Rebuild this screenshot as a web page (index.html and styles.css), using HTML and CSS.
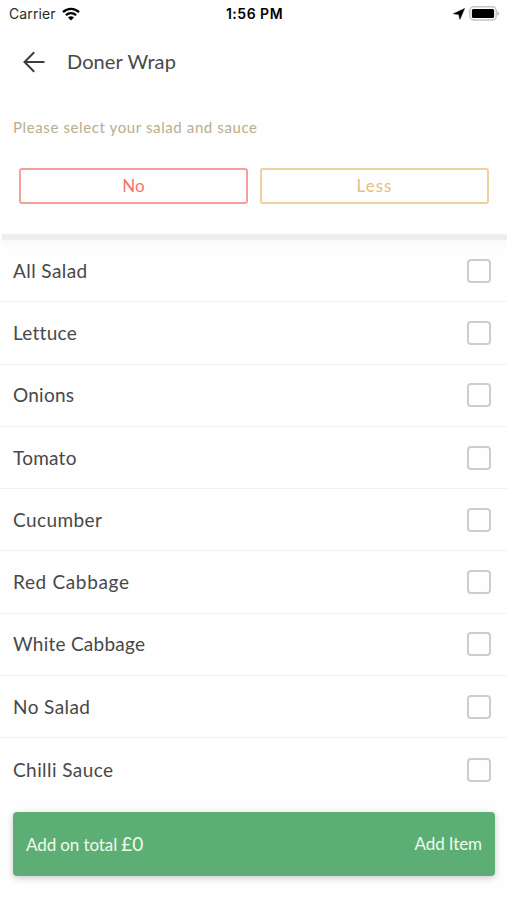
FILE: index.html
```html
<!DOCTYPE html>
<html lang="en">
<head>
    <meta charset="UTF-8">
    <meta name="viewport" content="width=device-width, initial-scale=1.0">
    <title>Doner Wrap</title>
    <link rel="stylesheet" href="styles.css">
</head>
<body>

    <div class="status-bar">
        <div class="status-left">
            <span class="carrier">Carrier</span>
            <svg class="wifi" width="18" height="14" viewBox="0 0 18 14">
                <path d="M1 5.2a11.5 11.5 0 0 1 16 0M3.9 8.2a7.3 7.3 0 0 1 10.2 0" fill="none" stroke="#000" stroke-width="2.3"/>
                <path d="M9 13.6 6 10.6a4.3 4.3 0 0 1 6 0z"/>
            </svg>
        </div>
        <span class="time">1:56 PM</span>
        <div class="status-right">
            <svg class="location" width="12" height="12" viewBox="0 0 12 12">
                <path d="M11.6.5 6.9 11.4 5.8 6.6.4 5.8z" stroke="#000" stroke-width=".5"/>
            </svg>
            <svg class="battery" width="31" height="15" viewBox="0 0 31 15">
                <rect x="0.8" y="0.8" width="26.4" height="13.2" rx="4" fill="#fff" stroke="#c4c4c4" stroke-width="1.4"/>
                <rect x="2.9" y="2.9" width="22.2" height="9" rx="1.5"/>
                <path d="M28.4 5.2c2.2.9 2.2 3.5 0 4.4z" fill="#b5b5b5"/>
            </svg>
        </div>
    </div>

    <div class="header">
        <svg class="back" width="22" height="22" viewBox="0 0 22 22">
            <path d="M21.5 11H1.7M11.2 1.3 1.5 11l9.7 9.7" fill="none" stroke="#3c3c3c" stroke-width="2"/>
        </svg>
        <h1>Doner Wrap</h1>
    </div>

    <p class="hint">Please select your salad and sauce</p>

    <div class="options">
        <button class="option no">No</button>
        <button class="option less">Less</button>
    </div>

    <div class="divider"></div>

    <div class="list">
        <label class="item"><span class="name wide">All Salad</span><span class="box"></span></label>
        <label class="item"><span class="name">Lettuce</span><span class="box"></span></label>
        <label class="item"><span class="name">Onions</span><span class="box"></span></label>
        <label class="item"><span class="name">Tomato</span><span class="box"></span></label>
        <label class="item"><span class="name wide">Cucumber</span><span class="box"></span></label>
        <label class="item"><span class="name wider">Red Cabbage</span><span class="box"></span></label>
        <label class="item"><span class="name">White Cabbage</span><span class="box"></span></label>
        <label class="item"><span class="name wide">No Salad</span><span class="box"></span></label>
        <label class="item"><span class="name wide">Chilli Sauce</span><span class="box"></span></label>
    </div>

    <div class="add-bar">
        <div class="total">Add on total <span class="price">£0</span></div>
        <span class="add">Add Item</span>
    </div>

</body>
</html>
```

FILE: styles.css
```css
* {
    box-sizing: border-box;
}

body {
    margin: 0;
    height: 900px;
    overflow: hidden;
    background: #fefefe;
    color: #484848;
    font-family: Lato, sans-serif;
}

.status-bar {
    display: grid;
    grid-template-columns: 1fr auto 1fr;
    align-items: center;
    height: 27px;
    padding: 0 7px 0 9px;
    color: #000;
    font-family: Inter, sans-serif;
    font-size: 14px;
}

.status-left,
.status-right {
    display: flex;
    align-items: center;
    gap: 6px;
}

.status-right {
    justify-content: flex-end;
    gap: 4px;
}

.carrier {
    color: #2b2b2b;
    letter-spacing: 0.1px;
}

.time {
    font-weight: 600;
    letter-spacing: 0.5px;
}

.header {
    display: flex;
    align-items: center;
    gap: 22px;
    height: 70px;
    padding-left: 23px;
}

h1 {
    margin: 0;
    padding-bottom: 2px;
    font-size: 20px;
    font-weight: 400;
    letter-spacing: 0.1px;
}

.hint {
    margin: 20px 0 0 13px;
    color: #b9ad8e;
    font-size: 15px;
    line-height: 20px;
    letter-spacing: 0.61px;
}

.options {
    display: flex;
    gap: 12px;
    padding: 31px 18px 0 19px;
}

.option {
    flex: 1;
    height: 36px;
    padding: 0 0 2px;
    border: 1.5px solid;
    border-width: 2px;
    border-radius: 3px;
    background: #fefefe;
    font-family: inherit;
    font-size: 17px;
}

.no {
    border-color: #f6a09a;
    color: #f1746c;
}

.less {
    border-color: #f1d0a0;
    color: #e9bd7e;
    letter-spacing: 1px;
}

.divider {
    height: 6px;
    margin: 30px 0 0 2px;
    background: #eeeeee;
    box-shadow: 0 5px 6px #f7f7f7;
}

.list {
    height: 561px;
}

.item {
    display: flex;
    align-items: center;
    justify-content: space-between;
    height: 62.3px;
    padding: 0 16px 0 13px;
    border-bottom: 1.5px solid #f1f1f1;
}

.item:last-child {
    border-bottom: none;
}

.name {
    padding-bottom: 1px;
    font-size: 19px;
    letter-spacing: 0.25px;
}

.wide {
    letter-spacing: 0.42px;
}

.wider {
    letter-spacing: 0.65px;
}

.box {
    width: 24px;
    height: 24px;
    border: 2px solid #cdcdcd;
    border-radius: 4px;
}

.add-bar {
    display: flex;
    align-items: center;
    justify-content: space-between;
    height: 64px;
    margin: 11px 12px 0 13px;
    padding: 0 13px 1px;
    border-radius: 4px;
    background: #5dae75;
    box-shadow: 0 2px 6px rgba(60, 40, 50, 0.25);
    color: #effbe9;
    font-size: 17px;
}

.total {
    padding-bottom: 1px;
    letter-spacing: -0.1px;
}

.add {
    letter-spacing: -0.1px;
}

.price {
    font-size: 19px;
}
```
